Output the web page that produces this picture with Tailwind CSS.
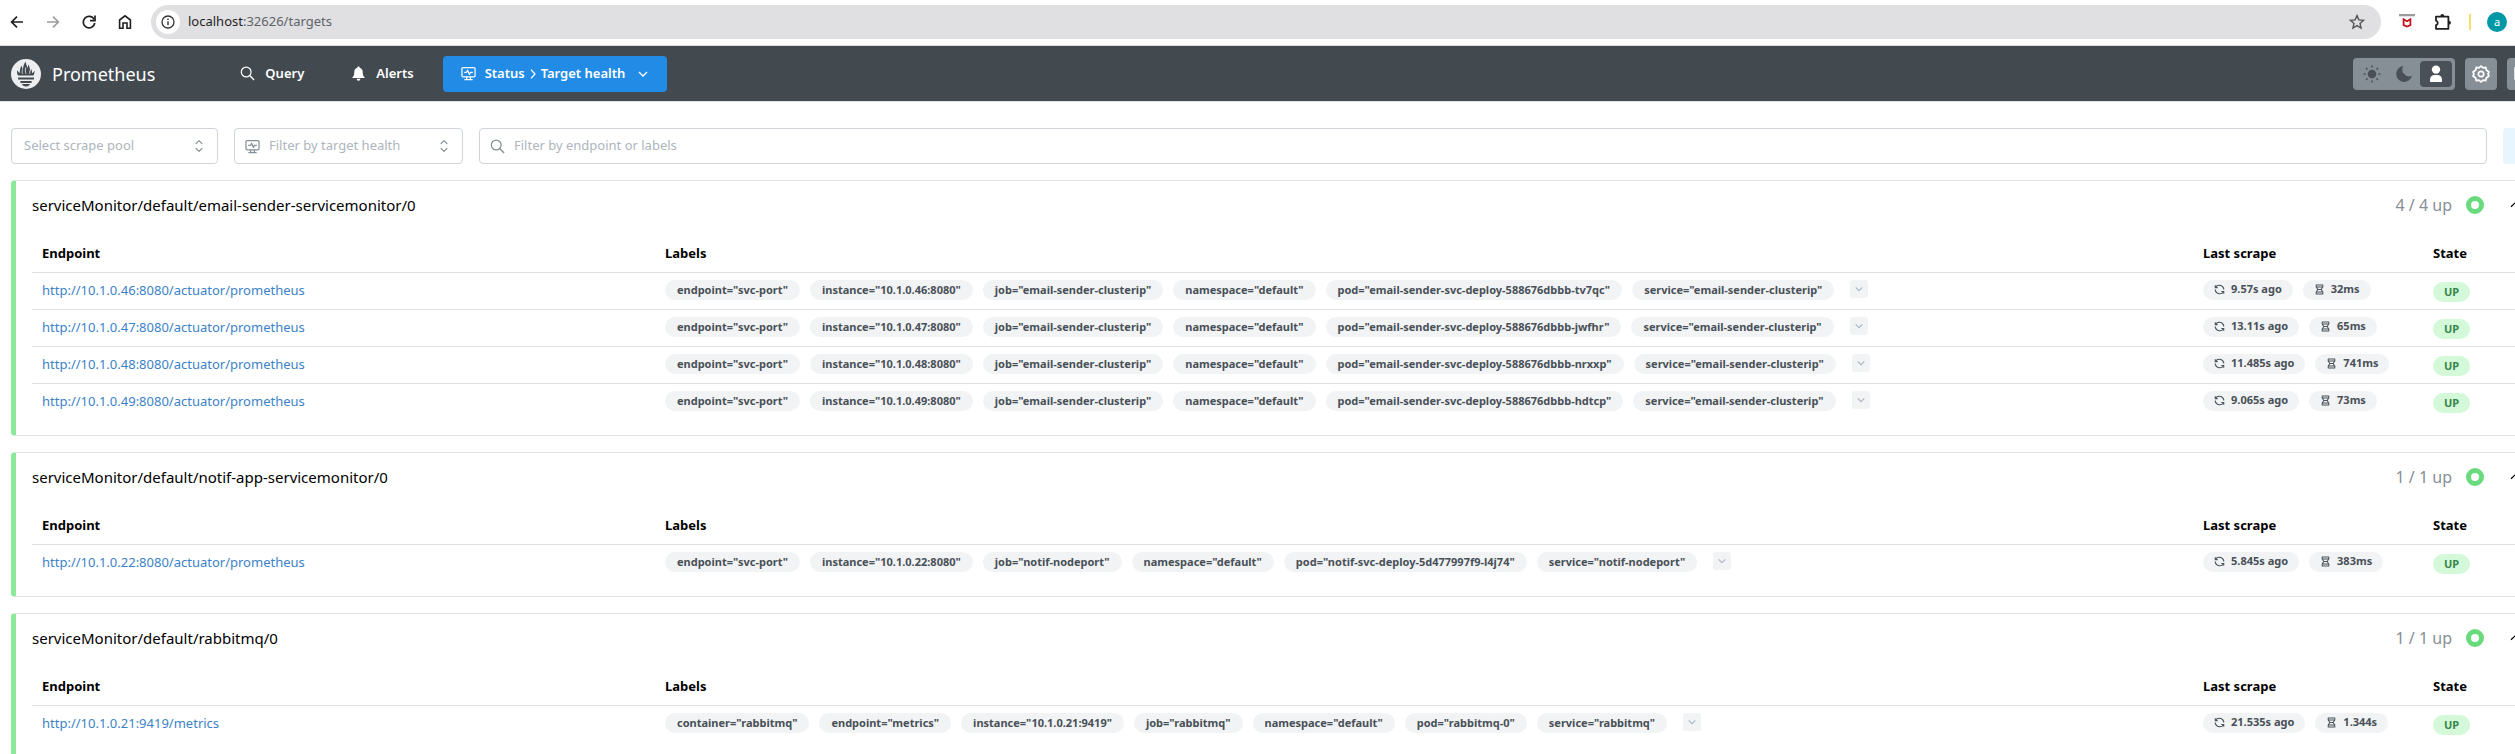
<!DOCTYPE html>
<html lang="en">
<head>
<meta charset="utf-8">
<title>Prometheus - Target health</title>
<script src="https://cdn.jsdelivr.net/npm/@tailwindcss/browser@4"></script>
</head>
<body class="min-h-screen overflow-hidden bg-white font-['Noto_Sans',sans-serif] text-[13px] text-black">

<svg class="hidden" aria-hidden="true">
  <symbol id="search" viewBox="0 0 16 16"><circle cx="6.6" cy="6.4" r="5.2" fill="none" stroke="currentColor" stroke-width="1.3"/><path d="M10.4 10.2 15 15" fill="none" stroke="currentColor" stroke-width="1.5"/></symbol>
  <symbol id="monitor" viewBox="0 0 16 16"><g fill="none" stroke="currentColor" stroke-width="1.3" stroke-linejoin="round"><rect x="1" y="1.7" width="14" height="9.8" rx="1.2"/><path d="M6 11.5v3M10 11.5v3M3.6 14.6h8.8M3.4 6.8H6l1-2.3L9 9l1-2.2h2.6"/></g></symbol>
  <symbol id="down" viewBox="0 0 12 12"><path d="M2 4l4 4 4-4" fill="none" stroke="currentColor" stroke-width="1.3"/></symbol>
  <symbol id="updown" viewBox="0 0 16 16"><path d="M5 5.6 8 2.6l3 3M5 10.4l3 3 3-3" fill="none" stroke="currentColor" stroke-width="1.2" stroke-linecap="round" stroke-linejoin="round"/></symbol>
  <symbol id="up" viewBox="0 0 16 16"><path d="M3 9.8 8 5l5 4.8" fill="none" stroke="currentColor" stroke-width="1.2"/></symbol>
  <symbol id="refresh" viewBox="0 0 12 12"><g fill="none" stroke="currentColor" stroke-width="1.2"><path d="M1.6 3.6A5 5 0 0 1 10.6 5v1M10.4 8.4A5 5 0 0 1 1.4 7V6"/><path d="M1.4 1.3v2.6H4M10.6 10.7V8.1H8"/></g></symbol>
  <symbol id="hourglass" viewBox="0 0 12 12"><path d="M2.4 1h7.2v2.2L7.8 6l1.8 2.8V11H2.4V8.8L4.2 6 2.4 3.2zM2.6 3.4h6.8M4.2 6h3.6M2.6 8.7h6.8" fill="none" stroke="currentColor" stroke-width="1.1" stroke-linejoin="round"/></symbol>
</svg>

<!-- Browser toolbar -->
<div class="flex h-[46px] items-center border-b border-[#dadce0] pb-[2px] pl-[9px] pr-2">
  <div class="flex items-center gap-5 text-[#1f1f1f]">
    <button aria-label="Back"><svg class="size-4" viewBox="0 0 16 16"><path d="M14 8H3M8 2.6 2.6 8 8 13.4" fill="none" stroke="currentColor" stroke-width="1.7"/></svg></button>
    <button aria-label="Forward" class="text-[#9b9b9b]"><svg class="size-4" viewBox="0 0 16 16"><path d="M2 8h11M8 2.6 13.4 8 8 13.4" fill="none" stroke="currentColor" stroke-width="1.5"/></svg></button>
    <button aria-label="Reload"><svg class="size-4" viewBox="0 0 16 16"><path d="M13.2 5.4A5.8 5.8 0 1 0 13.8 9" fill="none" stroke="currentColor" stroke-width="1.7"/><path d="M14 1.6V6.6H9" fill="none" stroke="currentColor" stroke-width="1.7"/></svg></button>
    <button aria-label="Home"><svg class="size-4" viewBox="0 0 16 16"><path d="M2.6 14.2V6L8 1.8 13.4 6v8.2H10V9H6v5.2z" fill="none" stroke="currentColor" stroke-width="1.6"/></svg></button>
  </div>
  <div class="ml-[18px] flex h-[34px] flex-1 items-center rounded-full bg-[#e0e0e2] pl-[5px] pr-4">
    <button aria-label="Site information" class="flex size-6 items-center justify-center rounded-full bg-white text-[#333]"><svg class="size-[14px]" viewBox="0 0 14 14"><circle cx="7" cy="7" r="6" fill="none" stroke="currentColor" stroke-width="1.3"/><path d="M7 6.2v4M7 3.6v1.5" stroke="currentColor" stroke-width="1.4"/></svg></button>
    <p class="ml-2 flex-1 text-[#5f6368]"><span class="text-[#1f1f1f]">localhost</span>:32626/targets</p>
    <button aria-label="Bookmark this tab" class="text-[#555]"><svg class="size-4" viewBox="0 0 16 16"><path d="M8 1.6l1.9 4.3 4.7.4-3.6 3.1 1.1 4.6L8 11.6l-4.1 2.4L5 9.4 1.4 6.3l4.7-.4z" fill="none" stroke="currentColor" stroke-width="1.4"/></svg></button>
  </div>
  <div class="ml-[18px] flex items-center">
    <button aria-label="McAfee extension"><svg class="size-4" viewBox="0 0 16 16"><path fill="#9a9a9a" d="M0 0h16v2.3H0z"/><path d="M4.6 5.2 8 7.2l3.4-2v6L8 12.6l-3.4-1.4z" fill="none" stroke="#c4161c" stroke-width="1.8"/></svg></button>
    <button aria-label="Extensions" class="ml-[19px] text-[#1f1f1f]"><svg class="size-[18px]" viewBox="0 0 18 18"><path d="M2 3.6h12.4v12.2H2v-3.6a2.4 2.4 0 0 0 0-4.6z" fill="none" stroke="currentColor" stroke-width="1.8" stroke-linejoin="round"/><path d="M6.4 3a1.9 1.9 0 0 1 3.8 0zM15 7.8a1.9 1.9 0 0 1 0 3.8z" fill="currentColor"/></svg></button>
    <span class="ml-[17px] h-4 w-[2px] bg-[#fbdc6a]"></span>
    <button aria-label="Profile" class="ml-4 size-5 rounded-full bg-[#0097a7] text-[11px] leading-5 text-white">a</button>
  </div>
</div>

<!-- Application bar; the page is wider than the window and runs past its right edge -->
<header class="-mr-6 flex h-14 items-center border-b border-[#dee2e6] bg-[#424a50] pl-[11px] text-white">
  <a href="#" class="flex items-center gap-[11px] text-lg">
    <svg class="size-[30px]" viewBox="0 0 30 30"><circle cx="15" cy="15" r="15" fill="#eceeef"/><path fill="#424a50" d="M7 16.400c-1-1.600-1.100-3.400-.7-5.200.9 1.700 1.700 2.300 2.400 2.900.1-3.400.6-5.200 1.800-7.700.4 2 .9 3 1.500 3.900.1-3.300.9-5.300 2.700-7.900.2 2.900 1.200 4.300 2 6.600.4-1.200.5-2.200.4-3.700 1.700 2.500 2 4.700 2 7.200.6-.6.900-1.400 1-2.600.9 1.500 1 2.900.9 4.300.9-.5 1.800-1.300 2.500-2.500.2 1.700-.2 3.200-1.100 4.700zM7 18.400h16v2.200H7zM9.400 22h11.200v2H9.400zM11 25h8c-.4 1.600-1.900 2.500-4 2.500S11.400 26.600 11 25z"/><path stroke="#eceeef" stroke-width=".8" fill="none" d="M11.600 14.800c-.8-1.600-.5-3 .1-4.400M15 14.800c-1-2.200-.8-4.200-.2-6.400M18.400 14.800c.5-1.200.6-2 .3-3.100"/></svg>
    <span>Prometheus</span>
  </a>
  <nav class="ml-[67px] flex items-center gap-[11px] font-semibold">
    <a href="#" class="flex h-9 items-center gap-[10px] px-[18px]"><svg class="size-[15px]"><use href="#search"/></svg>Query</a>
    <a href="#" class="flex h-9 items-center gap-[10px] px-[18px]"><svg class="size-[15px]" viewBox="0 0 15 15"><path fill="currentColor" d="M7.500.6c.7 0 1.200.5 1.200 1.100 2 .6 3 2.300 3 4.300 0 3 .6 4.300 1.900 5.300v.7H1.400v-.7C2.700 10.300 3.300 9 3.300 6c0-2 1-3.700 3-4.300 0-.6.500-1.100 1.200-1.100zM5.600 12.800h3.800a1.900 1.900 0 0 1-3.800 0z"/></svg>Alerts</a>
    <button class="flex h-9 items-center rounded bg-[#228be6] px-[18px] font-semibold"><svg class="mr-[9px] size-[15px]"><use href="#monitor"/></svg>Status<svg class="mx-[2px] size-3" viewBox="0 0 12 12"><path d="M4 1.600 8 6l-4 4.400" fill="none" stroke="currentColor" stroke-width="1.300"/></svg>Target health<svg class="ml-3 size-3"><use href="#down"/></svg></button>
  </nav>
  <div class="ml-auto flex gap-[10px]">
    <div class="flex h-8 rounded bg-[#868e96] p-[3px] text-[#495057]">
      <button aria-label="Light theme" class="flex w-8 items-center justify-center"><svg class="size-[18px]" viewBox="0 0 18 18"><circle cx="9" cy="9" r="4.300" fill="currentColor"/><path stroke="currentColor" stroke-width="1.500" d="M9 .6v2M9 15.400v2M.6 9h2M15.400 9h2M3.100 3.100l1.400 1.400M13.500 13.500l1.400 1.400M3.100 14.900l1.400-1.400M13.500 4.500l1.400-1.400"/></svg></button>
      <button aria-label="Dark theme" class="flex w-8 items-center justify-center"><svg class="size-[18px]" viewBox="0 0 18 18"><path fill="currentColor" d="M8.400 1A6.800 6.800 0 0 0 17 10.800 8 8 0 1 1 8.400 1z"/></svg></button>
      <button aria-label="System theme" class="flex w-8 items-center justify-center rounded bg-[#495057] text-white"><svg class="size-[18px]" viewBox="0 0 18 18"><circle cx="9" cy="4.600" r="4.200" fill="currentColor"/><path fill="currentColor" d="M3 17v-2.500A4.500 4.500 0 0 1 7.500 10h3a4.500 4.500 0 0 1 4.500 4.500V17z"/></svg></button>
    </div>
    <button aria-label="Settings" class="flex size-8 items-center justify-center rounded bg-[#868e96]"><svg class="size-[18px]" viewBox="0 0 18 18"><g fill="none" stroke="currentColor" stroke-width="1.700" stroke-linejoin="round"><path d="M9 1l2 1.900 2.700-.6.600 2.700L17 7l-1 2 1 2-2.700 2-.6 2.700-2.700-.6L9 17l-2-1.900-2.700.6-.6-2.700L1 11l1-2-1-2 2.700-2 .6-2.700 2.700.6z"/><circle cx="9" cy="9" r="2.700"/></g></svg></button>
    <button aria-label="Documentation" class="flex size-8 items-center justify-center rounded bg-[#868e96]"><svg class="size-[18px]" viewBox="0 0 18 18"><path d="M1 3h6l2 1 2-1h6v11h-6l-2 1-2-1H1zM9 4v11" fill="none" stroke="currentColor" stroke-width="1.500"/></svg></button>
  </div>
</header>

<main class="-mr-6 pl-[11px] pt-[26px]">
  <form class="flex text-[#868e96]">
    <label class="flex h-9 w-[207px] items-center rounded border border-[#ced4da] pl-3 pr-[10px]">
      <input aria-label="Scrape pool" placeholder="Select scrape pool" class="min-w-0 flex-1 outline-none placeholder:text-[#adb5bd]"><svg class="size-4"><use href="#updown"/></svg>
    </label>
    <label class="ml-4 flex h-9 w-[229px] items-center rounded border border-[#ced4da] pl-[10px] pr-[10px]">
      <svg class="mr-[9px] size-[15px]"><use href="#monitor"/></svg><input aria-label="Target health" placeholder="Filter by target health" class="min-w-0 flex-1 outline-none placeholder:text-[#adb5bd]"><svg class="size-4"><use href="#updown"/></svg>
    </label>
    <label class="ml-4 flex h-9 flex-1 items-center rounded border border-[#ced4da] pl-[10px] pr-[10px]">
      <svg class="mr-[9px] size-[15px]"><use href="#search"/></svg><input aria-label="Endpoint or labels" placeholder="Filter by endpoint or labels" class="min-w-0 flex-1 outline-none placeholder:text-[#adb5bd]">
    </label>
    <button type="button" aria-label="Collapse all pools" class="ml-4 size-9 rounded bg-[#e7f5ff]"></button>
  </form>
  <div id="pools" class="mt-4 flex flex-col gap-4"></div>
</main>

<script>
const mail = (n, pod, ago, took) => ({
  url: `http://10.1.0.${n}:8080/actuator/prometheus`,
  labels: ['endpoint="svc-port"', `instance="10.1.0.${n}:8080"`, 'job="email-sender-clusterip"', 'namespace="default"', `pod="email-sender-svc-deploy-588676dbbb-${pod}"`, 'service="email-sender-clusterip"'],
  ago, took
});
const pools = [
  { name: 'serviceMonitor/default/email-sender-servicemonitor/0', rows: [
    mail(46, 'tv7qc', '9.57s', '32ms'), mail(47, 'jwfhr', '13.11s', '65ms'),
    mail(48, 'nrxxp', '11.485s', '741ms'), mail(49, 'hdtcp', '9.065s', '73ms')] },
  { name: 'serviceMonitor/default/notif-app-servicemonitor/0', rows: [{
    url: 'http://10.1.0.22:8080/actuator/prometheus',
    labels: ['endpoint="svc-port"', 'instance="10.1.0.22:8080"', 'job="notif-nodeport"', 'namespace="default"', 'pod="notif-svc-deploy-5d477997f9-l4j74"', 'service="notif-nodeport"'],
    ago: '5.845s', took: '383ms' }] },
  { name: 'serviceMonitor/default/rabbitmq/0', rows: [{
    url: 'http://10.1.0.21:9419/metrics',
    labels: ['container="rabbitmq"', 'endpoint="metrics"', 'instance="10.1.0.21:9419"', 'job="rabbitmq"', 'namespace="default"', 'pod="rabbitmq-0"', 'service="rabbitmq"'],
    ago: '21.535s', took: '1.344s' }] }
];
const label = t => `<span class="h-5 rounded-full bg-[#f1f3f5] px-3 leading-5">${t}</span>`;
const stat = (icon, t) => `<span class="flex h-5 items-center gap-[6px] rounded-full bg-[#f1f3f5] pl-[11px] pr-[11px]"><svg class="size-[11px]"><use href="#${icon}"/></svg>${t}</span>`;
const row = r => `<tr class="border-t border-[#dee2e6] align-top">
  <td class="h-[37px] px-[10px] pt-[7px] leading-5"><a href="#" class="text-[#3b82c8]">${r.url}</a></td>
  <td class="px-[10px] pt-[7px]"><div class="flex items-start gap-[10px] whitespace-nowrap text-[11px] font-bold text-[#495057]">${r.labels.map(label).join('')}<button aria-label="Show more labels" class="ml-[6px] flex size-[18px] items-center justify-center rounded-[3px] bg-[#f1f3f5] text-[#adb5bd]"><svg class="size-[10px]"><use href="#down"/></svg></button></div></td>
  <td class="px-[10px] pt-[7px]"><div class="flex gap-[10px] whitespace-nowrap text-[11px] font-bold text-[#495057]">${stat('refresh', r.ago + ' ago')}${stat('hourglass', r.took)}</div></td>
  <td class="px-[10px] pt-[9px]"><span class="block h-5 w-[37px] rounded-full bg-[#d3f9d8] text-center text-[11px] font-bold leading-5 text-[#37844a]">UP</span></td></tr>`;
document.getElementById('pools').innerHTML = pools.map(p => `
<section class="rounded border border-l-[5px] border-[#dee2e6] border-l-[#8ce99a] pb-[15px]">
  <button class="flex h-12 w-full items-center pl-4 pr-[14px] text-[15px]">${p.name}
    <span class="ml-auto text-base text-[#868e96]">${p.rows.length} / ${p.rows.length} up</span>
    <span class="ml-[14px] size-[18px] rounded-full border-[5px] border-[#69db7c]"></span>
    <svg class="ml-6 size-4"><use href="#up"/></svg>
  </button>
  <div class="pl-4 pr-[14px] pt-[6px]">
    <table class="w-full table-fixed border-collapse text-left">
      <colgroup><col class="w-1/4"><col><col class="w-[230px]"><col class="w-[101px]"></colgroup>
      <thead><tr><th class="h-[37px] px-[10px] font-bold">Endpoint</th><th class="px-[10px] font-bold">Labels</th><th class="px-[10px] font-bold">Last scrape</th><th class="px-[10px] font-bold">State</th></tr></thead>
      <tbody>${p.rows.map(row).join('')}</tbody>
    </table>
  </div>
</section>`).join('');
</script>
</body>
</html>
